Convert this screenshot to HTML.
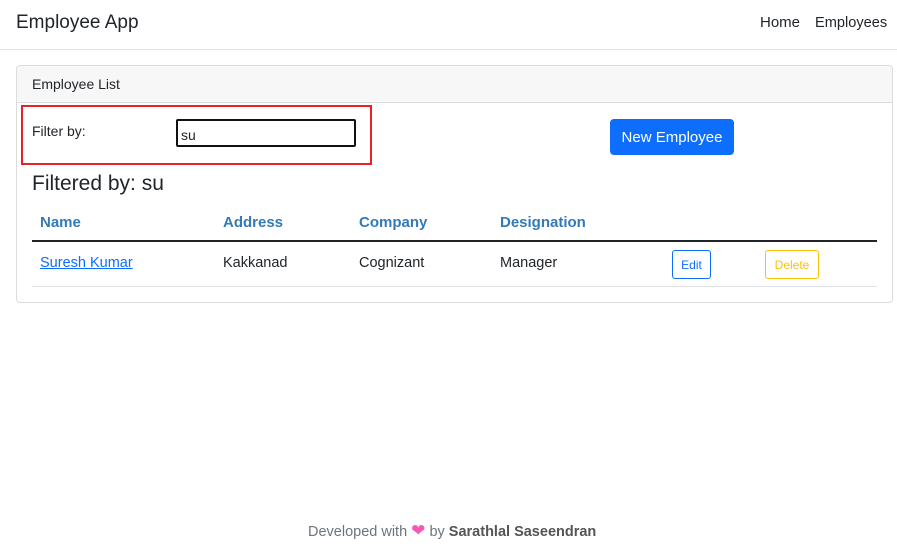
<!DOCTYPE html>
<html><head><style>
*{box-sizing:border-box;margin:0;padding:0}
body{width:897px;height:548px;background:#fff;font-family:"Liberation Sans",sans-serif;color:#212529;position:relative;overflow:hidden;font-size:15px}
.abs{position:absolute;white-space:nowrap}
</style></head><body>
<div class="abs" style="left:16px;top:12px;font-size:19px;">Employee App</div>
<div class="abs" style="left:760px;top:14px;font-size:15px;">Home</div>
<div class="abs" style="left:815px;top:15px;font-size:14.6px;">Employees</div>
<div class="abs" style="left:0;top:49px;width:897px;height:1px;background:#dee2e6"></div>

<div class="abs" style="left:16px;top:65px;width:877px;height:238px;border:1px solid #dcdcdc;border-radius:4px;"></div>
<div class="abs" style="left:17px;top:66px;width:875px;height:37px;background:#f7f7f7;border-bottom:1px solid #dcdcdc;border-radius:4px 4px 0 0"></div>
<div class="abs" style="left:32px;top:76px;font-size:14px;">Employee List</div>

<div class="abs" style="left:21px;top:105px;width:351px;height:60px;border:2px solid #e8202a"></div>
<div class="abs" style="left:32px;top:123px;font-size:14px;">Filter by:</div>
<div class="abs" style="left:176px;top:119px;width:180px;height:28px;border:2px solid #111;border-radius:2px;font-size:14px;padding:6px 3px 4px">su</div>

<div class="abs" style="left:610px;top:119px;width:124px;height:36px;background:#0d6efd;border-radius:4px;color:#fff;font-size:15px;text-align:center;line-height:38px">New Employee</div>

<div class="abs" style="left:32px;top:172px;font-size:21px;">Filtered by: su</div>

<div class="abs" style="left:40px;top:214px;font-size:15px;font-weight:bold;color:#337ab7">Name</div>
<div class="abs" style="left:223px;top:214px;font-size:15px;font-weight:bold;color:#337ab7">Address</div>
<div class="abs" style="left:359px;top:214px;font-size:15px;font-weight:bold;color:#337ab7">Company</div>
<div class="abs" style="left:500px;top:214px;font-size:15px;font-weight:bold;color:#337ab7">Designation</div>
<div class="abs" style="left:32px;top:240px;width:845px;height:2px;background:#212529"></div>

<div class="abs" style="left:40px;top:255px;font-size:14.5px;color:#0d6efd;text-decoration:underline">Suresh Kumar</div>
<div class="abs" style="left:223px;top:255px;font-size:14.5px;">Kakkanad</div>
<div class="abs" style="left:359px;top:255px;font-size:14.5px;">Cognizant</div>
<div class="abs" style="left:500px;top:255px;font-size:14.5px;">Manager</div>
<div class="abs" style="left:672px;top:250px;width:39px;height:29px;border:1px solid #0d6efd;border-radius:3px;color:#0d6efd;font-size:12px;text-align:center;line-height:29px">Edit</div>
<div class="abs" style="left:765px;top:250px;width:54px;height:29px;border:1px solid #ffc107;border-radius:3px;color:#ffc107;font-size:12px;text-align:center;line-height:29px">Delete</div>
<div class="abs" style="left:32px;top:286px;width:845px;height:1px;background:#dee2e6"></div>

<div class="abs" style="left:308px;top:521px;font-size:14.5px;color:#6c757d">Developed with <span style="color:#f45ab5;font-size:17px">&#10084;</span> by <b style="color:#555">Sarathlal Saseendran</b></div>
</body></html>
